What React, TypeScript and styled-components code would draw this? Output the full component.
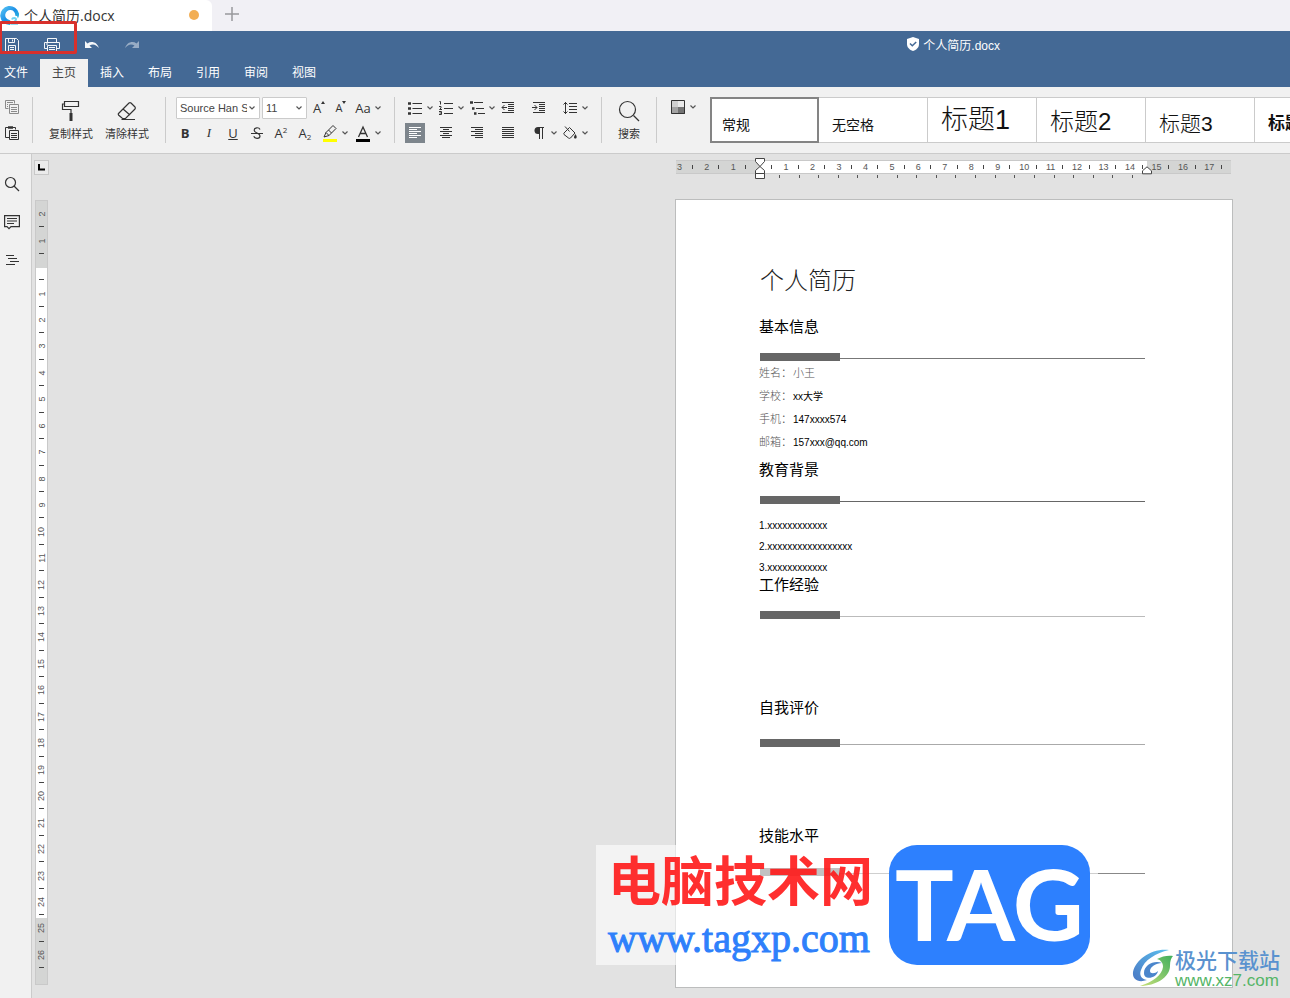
import React from 'react';
import styled, { createGlobalStyle } from 'styled-components';

const blue = '#446995';
const panel = '#f1f1f1';
const line = '#cbcbcb';
const ink = '#333';

const GlobalStyle = createGlobalStyle`
  * { box-sizing: border-box; }
  body {
    margin: 0;
    font-family: "Liberation Sans", "Noto Sans CJK SC", sans-serif;
    font-size: 12px;
    color: ${ink};
  }
  button, select { font: inherit; color: inherit; }
`;

const Shell = styled.div`
  position: relative;
  display: flex;
  flex-direction: column;
  min-height: 100vh;
  overflow: hidden;
  background: #e2e2e2;
`;

/* ---------- window tabs ---------- */

const TabStrip = styled.header`
  display: flex;
  align-items: stretch;
  height: 31px;
  background: #f1f0f5;
`;

const FileTab = styled.div`
  display: flex;
  align-items: center;
  width: 212px;
  padding: 0 13px 2px 0;
  gap: 4px;
  background: #fff;
  border-radius: 0 6px 0 0;
  font-family: "Open Sans", "Noto Sans CJK SC", sans-serif;
  font-size: 14px;
  color: #333;
`;

const UnsavedDot = styled.span`
  width: 10px;
  height: 10px;
  margin-left: auto;
  border-radius: 50%;
  background: #f2ae54;
`;

const PlainButton = styled.button`
  display: inline-flex;
  align-items: center;
  justify-content: center;
  padding: 0;
  border: 0;
  background: transparent;
`;

const NewTabButton = styled(PlainButton)`
  width: 40px;
  padding-bottom: 3px;
`;

/* ---------- title bar and menu ---------- */

const TitleBar = styled.div`
  display: flex;
  align-items: center;
  gap: 16px;
  height: 28px;
  padding-right: 290px;
  background: ${blue};
  color: #fff;
`;

const QuickButton = styled(PlainButton)<{ $dim?: boolean }>`
  width: 24px;
  height: 24px;
  opacity: ${(p) => (p.$dim ? 0.45 : 0.95)};
`;

const DocTitle = styled.h1`
  display: flex;
  align-items: center;
  gap: 4px;
  margin: 0 0 0 auto;
  padding-bottom: 2px;
  font-size: 12px;
  font-weight: 400;
`;

const MenuBar = styled.nav`
  display: flex;
  height: 28px;
  background: ${blue};
`;

const MenuTab = styled(PlainButton)<{ $active?: boolean; $first?: boolean }>`
  width: ${(p) => (p.$first ? 40 : 48)}px;
  padding: 0 ${(p) => (p.$first ? 8 : 0)}px 4px 0;
  font-family: "Noto Sans CJK SC", sans-serif;
  color: ${(p) => (p.$active ? '#444' : '#fff')};
  background: ${(p) => (p.$active ? panel : 'transparent')};
`;

/* ---------- toolbar ---------- */

const Toolbar = styled.div`
  display: flex;
  height: 67px;
  padding-top: 10px;
  background: ${panel};
  border-bottom: 1px solid ${line};
`;

const Separator = styled.div`
  flex: none;
  width: 1px;
  height: 46px;
  background: ${line};
`;

const ClipGroup = styled.div`
  display: flex;
  flex: none;
  flex-direction: column;
  gap: 6px;
  width: 32px;
`;

const BigGroup = styled.div<{ $pad: number }>`
  display: flex;
  flex: none;
  gap: 12px;
  padding: 0 ${(p) => p.$pad}px;
`;

const BigButton = styled(PlainButton)`
  flex-direction: column;
  gap: 4px;
  height: 46px;
  padding-top: 2px;
  font-size: 11px;
  line-height: 17px;
`;

const Rows = styled.div<{ $left: number; $right: number }>`
  display: flex;
  flex: none;
  flex-direction: column;
  gap: 4px;
  padding: 0 ${(p) => p.$right}px 0 ${(p) => p.$left}px;
`;

const Row = styled.div`
  display: flex;
  align-items: center;
  height: 22px;

  & + & { height: 20px; }
`;

const ParagraphGrid = styled.div`
  display: grid;
  flex: none;
  grid-template-columns: repeat(6, 31px);
  grid-template-rows: 22px 20px;
  row-gap: 4px;
  align-items: center;
  padding: 0 10px;
`;

const IconButton = styled(PlainButton)<{ $w?: number; $active?: boolean }>`
  width: ${(p) => p.$w ?? 20}px;
  height: 20px;
  color: ${(p) => (p.$active ? '#fff' : ink)};
  background: ${(p) => (p.$active ? '#7d858c' : 'transparent')};
`;

const SplitButton = styled(PlainButton)<{ $gap?: number }>`
  justify-content: flex-start;
  width: 30px;
  height: 20px;
  margin-left: ${(p) => p.$gap ?? 0}px;
`;

const IconSlot = styled.span`
  display: inline-flex;
  align-items: center;
  justify-content: center;
  width: 20px;
  height: 20px;
`;

const Letter = styled.span<{ $bold?: boolean; $italic?: boolean; $serif?: boolean; $deco?: string; $small?: boolean }>`
  font-family: ${(p) => (p.$serif ? '"Liberation Serif", serif' : '"Open Sans", sans-serif')};
  font-size: ${(p) => (p.$small ? 11 : 13)}px;
  line-height: 16px;
  font-weight: ${(p) => (p.$bold ? 700 : 400)};
  font-style: ${(p) => (p.$italic ? 'italic' : 'normal')};
  text-decoration: ${(p) => p.$deco ?? 'none'};

  sup, sub { font-size: 8px; line-height: 0; }
  sub { vertical-align: -2px; }
`;

const SelectBox = styled.label<{ $w: number; $gap: number }>`
  position: relative;
  width: ${(p) => p.$w}px;
  height: 22px;
  margin-left: ${(p) => p.$gap}px;

  svg { position: absolute; right: 3px; top: 7px; background: #fff; }

  select {
    appearance: none;
    width: 100%;
    height: 100%;
    padding: 0 8px 0 3px;
    border: 1px solid ${line};
    border-radius: 1px;
    background: #fff;
    font-size: 11px;
    color: #444;
  }
`;

const SchemeSlot = styled.div`
  flex: none;
  width: 53px;
  padding: 0 10px 0 11px;
`;

const Gallery = styled.div`
  display: flex;
  flex: 1;
  min-width: 0;
  height: 46px;
  overflow: hidden;
`;

const StyleCard = styled(PlainButton)<{ $size: number; $bold?: boolean; $active?: boolean }>`
  flex: none;
  align-items: flex-end;
  justify-content: flex-start;
  width: 109px;
  padding: 0 0 ${(p) => (p.$size > 20 ? 8 : 10)}px 13px;
  border: solid ${line};
  border-width: 1px 1px 1px 0;
  background: #fff;
  color: #111;
  font-size: ${(p) => p.$size}px;
  line-height: 1;
  font-weight: ${(p) => (p.$bold ? 700 : p.$size > 20 ? 300 : 400)};
  white-space: nowrap;
  ${(p) => p.$active && 'border: 2px solid #848484; padding: 0 0 9px 10px;'}
`;

/* ---------- workspace ---------- */

const Workspace = styled.div`
  display: flex;
  flex: 1;
`;

const SideBar = styled.aside`
  display: flex;
  flex: none;
  flex-direction: column;
  align-items: flex-start;
  gap: 14px;
  width: 32px;
  padding-top: 18px;
  background: ${panel};
  border-right: 1px solid ${line};
`;

const SideButton = styled(PlainButton)`
  width: 24px;
  height: 24px;
`;

const RulerColumn = styled.div`
  flex: none;
  width: 17px;
  padding: 6px 0 13px 2px;
`;

const TabStop = styled(PlainButton)`
  width: 15px;
  height: 15px;
  border: 1px solid #c8c8c8;
  background: #ebebeb;
`;

const VRuler = styled.div`
  display: flex;
  flex-direction: column;
  width: 13px;
  height: 785px;
  margin: 25px 0 0 1px;
  padding: 0 0 16px;
  border: 1px solid #c9c9c9;
  background: linear-gradient(#d4d5d4 67px, #fff 67px 717px, #d4d5d4 717px);
`;

const VCell = styled.div`
  position: relative;
  display: flex;
  flex: 1;
  align-items: center;
  justify-content: center;
  font-size: 9px;
  color: #555;

  span { transform: rotate(-90deg); }

  &::after {
    content: "";
    position: absolute;
    bottom: 0;
    left: 3px;
    width: 5px;
    height: 1px;
    background: #444;
  }
`;

const DocColumn = styled.main`
  width: 558px;
  margin: 6px 57px 11px auto;
`;

const HRuler = styled.div`
  position: relative;
  display: flex;
  height: 14px;
  margin: 0 2px 0 1px;
  padding-right: 9px;
  border: solid #c9c9c9;
  border-width: 1px 0;
  background: linear-gradient(90deg, #d4d5d4 84px, #fff 84px 471px, #d4d5d4 471px);
`;

const HCell = styled.div<{ $lead?: boolean }>`
  position: relative;
  display: flex;
  flex: ${(p) => (p.$lead ? 'none' : '1')};
  width: ${(p) => (p.$lead ? '17px' : 'auto')};
  align-items: center;
  justify-content: ${(p) => (p.$lead ? 'flex-start' : 'center')};
  padding-left: 1px;
  font-size: 9px;
  color: #555;

  &::after {
    content: "";
    position: absolute;
    right: 0;
    top: 4px;
    width: 1px;
    height: 4px;
    background: #444;
  }
`;

const Marker = styled.svg<{ $x: number; $y: number }>`
  position: absolute;
  left: ${(p) => p.$x}px;
  top: ${(p) => p.$y}px;
`;

const TabTicks = styled.div`
  display: flex;
  justify-content: space-between;
  height: 4px;
  margin: 1px 100px 0 104px;

  i { width: 1px; height: 3px; background: #555; }
`;

const Page = styled.article`
  margin-top: 20px;
  padding: 64px 87px 111px 84px;
  border: 1px solid #bcbdbd;
  background: #fff;
  color: #000;
`;

const PageTitle = styled.h2`
  margin: 0 0 22px;
  font-size: 24px;
  line-height: 34px;
  font-weight: 300;
  color: #222;
`;

const SectionTitle = styled.h3<{ $before: number; $after: number }>`
  margin: ${(p) => p.$before}px 0 ${(p) => p.$after}px -1px;
  font-size: 15px;
  line-height: 14px;
  font-weight: 400;
`;

const SectionRule = styled.div<{ $tone: string }>`
  width: 100%;
  height: 8px;
  background:
    linear-gradient(#666, #666) 0 0 / 80px 8px no-repeat,
    linear-gradient(${(p) => p.$tone}, ${(p) => p.$tone}) 0 5px / 100% 1px no-repeat;
`;

const Fields = styled.dl`
  margin: 0 0 0 -1px;
  padding-top: 1px;

  div { display: flex; height: 23px; line-height: 23px; }
  dt { width: 34px; font-size: 11px; font-weight: 300; color: #555; }
`;

const FieldValue = styled.dd<{ $soft?: boolean }>`
  margin: 0;
  font-size: ${(p) => (p.$soft ? 11 : 10)}px;
  font-weight: ${(p) => (p.$soft ? 300 : 400)};
  color: ${(p) => (p.$soft ? '#555' : '#000')};
`;

const Items = styled.ol`
  margin: 11px 0 0 -1px;
  padding: 0;
  list-style: none;
  font-size: 10px;
  line-height: 21px;
`;

/* ---------- overlays ---------- */

const Highlight = styled.div`
  position: absolute;
  left: -1px;
  top: 21px;
  width: 78px;
  height: 33px;
  border: 3px solid #d8302c;
  border-radius: 2px;
`;

const SiteBadge = styled.div`
  position: absolute;
  top: 845px;
  right: 192px;
  display: flex;
  justify-content: space-between;
  width: 502px;
  height: 120px;
  padding: 0 8px 0 12px;
  background: rgba(255, 255, 255, 0.6);
`;

const SiteName = styled.div`
  padding-bottom: 6px;
  font-family: "Noto Sans CJK SC", sans-serif;
  font-size: 53px;
  font-weight: 700;
  line-height: 66px;
  color: rgba(255, 24, 24, 0.9);
  white-space: nowrap;
`;

const SiteUrl = styled.div`
  font-family: "Liberation Serif", serif;
  font-size: 40px;
  line-height: 44px;
  color: #2e80fb;
  -webkit-text-stroke: 1px #2e80fb;
`;

const SiteLogo = styled.div`
  display: flex;
  align-items: center;
  justify-content: center;
  width: 201px;
  height: 120px;
  padding-bottom: 4px;
  border-radius: 28px;
  background: #2d80fe;
  color: #fff;
  font-family: Lato, sans-serif;
  font-size: 98px;
  font-weight: 700;
  line-height: 1;
`;

const CornerBadge = styled.div`
  position: absolute;
  right: 10px;
  top: 944px;
  display: flex;
  align-items: center;
  gap: 1px;
`;

const CornerName = styled.div`
  font-family: "Noto Sans CJK SC", sans-serif;
  font-size: 21px;
  font-weight: 500;
  line-height: 30px;
  color: #5a92cf;
`;

const CornerUrl = styled.div`
  padding-bottom: 3px;
  font-size: 17px;
  line-height: 14px;
  color: #55b567;
`;

/* ---------- icons ---------- */

type IconProps = { w?: number; h?: number; sw?: number; children: React.ReactNode };

const Icon = ({ w = 16, h = 16, sw = 1, children }: IconProps) => (
  <svg width={w} height={h} viewBox={`0 0 ${w} ${h}`} fill="none" stroke="currentColor" strokeWidth={sw} aria-hidden="true">
    {children}
  </svg>
);

const Chevron = () => (
  <svg width="10" height="8" viewBox="0 0 10 8" fill="none" stroke="#555" strokeWidth="1.2" aria-hidden="true">
    <path d="M2.5 2.5 5 5l2.5-2.5" />
  </svg>
);

const AlignIcon = ({ rows }: { rows: [number, number][] }) => (
  <Icon w={14} h={14} sw={1}>
    {rows.map(([a, b], i) => (
      <path key={i} d={`M${a} ${1.5 + i * 2}H${b}`} />
    ))}
  </Icon>
);

const Split = ({ label, gap, children }: { label: string; gap?: number; children: React.ReactNode }) => (
  <SplitButton aria-label={label} $gap={gap}>
    <IconSlot>{children}</IconSlot>
    <Chevron />
  </SplitButton>
);

const verticalLabels = ['2', '1', '', ...Array.from({ length: 26 }, (_, i) => String(i + 1))];
const horizontalLabels = ['2', '1', '', ...Array.from({ length: 17 }, (_, i) => String(i + 1))];

const menu = ['文件', '主页', '插入', '布局', '引用', '审阅', '视图'];

const styleCards = [
  { name: '常规', size: 14 },
  { name: '无空格', size: 14 },
  { name: '标题1', size: 27 },
  { name: '标题2', size: 24 },
  { name: '标题3', size: 21 },
  { name: '标题4', size: 17, bold: true },
];

const fields = [
  { name: '姓名：', value: '小王', soft: true },
  { name: '学校：', value: 'xx大学' },
  { name: '手机：', value: '147xxxx574' },
  { name: '邮箱：', value: '157xxx@qq.com' },
];

export default function App() {
  return (
    <Shell>
      <GlobalStyle />

      <TabStrip>
        <FileTab>
          <svg width="20" height="22" viewBox="0 0 20 22" aria-hidden="true">
            <defs>
              <linearGradient id="ring" x1="0" y1="0" x2="1" y2="1">
                <stop offset="0" stopColor="#62ccf6" />
                <stop offset="0.5" stopColor="#1b8fe6" />
                <stop offset="1" stopColor="#38cfd8" />
              </linearGradient>
            </defs>
            <path d="M10 21A9.500 9.500 0 1 1 19 9.500c.2 2-.3 3.600-1.200 5-.2-2.600-1.200-3-2.600-2.800a5 5 0 1 0-5.800 4.300c1.400.3 2 3 .6 5Z" fill="url(#ring)" />
            <path d="M12 15.500c.5-2 4-2 4 0 0 1.500-2 2-3.500 4.200H18" fill="none" stroke="#6fd3f2" strokeWidth="2" />
          </svg>
          个人简历.docx
          <UnsavedDot />
        </FileTab>
        <NewTabButton aria-label="新建标签">
          <svg width="14" height="14" viewBox="0 0 14 14" stroke="#98989c" strokeWidth="1.500" aria-hidden="true">
            <path d="M7 0v14M0 7h14" />
          </svg>
        </NewTabButton>
      </TabStrip>

      <TitleBar>
        <QuickButton aria-label="保存">
          <Icon w={14} h={14}>
            <path d="M.5.5h11l2 2v11H.5zM3.500.5v4h6v-4M7.500 1.500v2M3.500 13.500v-6h7v6M5 9.500h4M5 11.500h4" />
          </Icon>
        </QuickButton>
        <QuickButton aria-label="打印">
          <Icon w={16} h={14}>
            <path d="M3.500 4V.5h9V4M3.500 10.500h-3v-6h15v6h-3M3.500 7.500h9v6h-9zM5 9.500h6M5 11.500h6M2 6h2" />
          </Icon>
        </QuickButton>
        <QuickButton aria-label="撤销">
          <svg width="14" height="10" viewBox="0 0 14 10" fill="#fff" aria-hidden="true">
            <path d="M0 1v7h7L4.500 5.600C8 3.500 11 4.500 13.800 8 12.500 2.500 6.500.5 2.500 3.400Z" />
          </svg>
        </QuickButton>
        <QuickButton aria-label="重做" $dim>
          <svg width="14" height="10" viewBox="0 0 14 10" fill="#fff" aria-hidden="true">
            <path d="M14 1v7H7l2.500-2.400C6 3.500 3 4.500.2 8 1.500 2.500 7.500.5 11.500 3.400Z" />
          </svg>
        </QuickButton>
        <DocTitle>
          <svg width="12" height="14" viewBox="0 0 12 14" aria-hidden="true">
            <path d="M6 0l6 2v5c0 3.500-2.500 5.800-6 7-3.500-1.200-6-3.500-6-7V2z" fill="#fff" />
            <path d="M3 6.500l2.300 2.300L9.200 5" fill="none" stroke={blue} strokeWidth="1.500" />
          </svg>
          个人简历.docx
        </DocTitle>
      </TitleBar>

      <MenuBar>
        {menu.map((m, i) => (
          <MenuTab key={m} $first={i === 0} $active={i === 1}>{m}</MenuTab>
        ))}
      </MenuBar>

      <Toolbar>
        <ClipGroup>
          <IconButton $w={24} aria-label="复制">
            <svg width="14" height="14" viewBox="0 0 14 14" fill="none" stroke="#8a8a8a" aria-hidden="true">
              <path d="M3.500 8.500h-3v-8h9v3M2 2.500h6M2 4.500h1M2 6.500h1M4.500 4.500h9v9h-9zM6 7.500h6M6 9.500h6M6 11.500h6" />
            </svg>
          </IconButton>
          <IconButton $w={24} aria-label="粘贴">
            <Icon w={14} h={14}>
              <path d="M4.500 11.500h-4v-10h10v2M4.500 4.500h9v9h-9zM6 7.500h6M6 9.500h6M6 11.500h6" />
              <path d="M3 1.500h5" strokeWidth="2.500" />
            </Icon>
          </IconButton>
        </ClipGroup>
        <Separator />
        <BigGroup $pad={16}>
          <BigButton>
            <Icon w={20} h={22} sw={1.2}>
              <path d="M3.500 1.500h14v5h-14zM3.500 4H1.500v5.500H10V14" />
              <path d="M10 13v8" strokeWidth="3" />
            </Icon>
            复制样式
          </BigButton>
          <BigButton>
            <Icon w={20} h={22} sw={1.2}>
              <path d="M1.500 13.500 12 3q1-.8 2 0l4 4q.8 1 0 2L8.500 18.500h-3L1.500 15q-.6-.8 0-1.500ZM6 9l7 6M4.500 19.500H18" />
            </Icon>
            清除样式
          </BigButton>
        </BigGroup>
        <Separator />
        <Rows $left={7} $right={11}>
          <Row>
            <SelectBox $w={84} $gap={3}>
              <select aria-label="字体" defaultValue="Source Han Sans">
                <option>Source Han Sans</option>
              </select>
              <Chevron />
            </SelectBox>
            <SelectBox $w={45} $gap={2}>
              <select aria-label="字号" defaultValue="11">
                <option>11</option>
              </select>
              <Chevron />
            </SelectBox>
            <IconButton $w={24} aria-label="增大字号">
              <Letter>A</Letter>
              <svg width="4" height="14" viewBox="0 0 4 14" fill={ink} aria-hidden="true"><path d="M2 0l2 3H0z" /></svg>
            </IconButton>
            <IconButton aria-label="减小字号">
              <Letter $small>A</Letter>
              <svg width="4" height="14" viewBox="0 0 4 14" fill={ink} aria-hidden="true"><path d="M2 3l2-3H0z" /></svg>
            </IconButton>
            <Split label="更改大小写" gap={2}><Letter>Aa</Letter></Split>
          </Row>
          <Row>
            <IconButton $w={24} aria-label="粗体"><Letter $bold>B</Letter></IconButton>
            <IconButton $w={24} aria-label="斜体"><Letter $italic $serif>I</Letter></IconButton>
            <IconButton $w={24} aria-label="下划线"><Letter $deco="underline">U</Letter></IconButton>
            <IconButton $w={24} aria-label="删除线">
              <Icon w={12} h={14} sw={1.2}>
                <path d="M9 3.500C8 1 3.200 1.200 3.200 4.200 3.200 7.500 9 6.500 9 10c0 3-5.200 3.200-6.200.3M0 7.500h12" />
              </Icon>
            </IconButton>
            <IconButton $w={24} aria-label="上标"><Letter>A<sup>2</sup></Letter></IconButton>
            <IconButton $w={24} aria-label="下标"><Letter>A<sub>2</sub></Letter></IconButton>
            <Split label="突出显示颜色" gap={3}>
              <Icon w={16} h={18}>
                <path d="M4 8.500 11 1.500l3 3-7 7zM4 8.500l-2 4.500 5-1.500M6.500 6l3 3" />
                <path d="M1 16.500h14" stroke="#ff0" strokeWidth="3" />
              </Icon>
            </Split>
            <Split label="字体颜色" gap={3}>
              <Icon w={14} h={18}>
                <path d="M2.500 13 7 3l4.500 10M4 9.500h6" strokeWidth="1.300" />
                <path d="M0 16.500h14" stroke="#000" strokeWidth="3" />
              </Icon>
            </Split>
          </Row>
        </Rows>
        <Separator />
        <ParagraphGrid>
          <Split label="项目符号">
            <Icon w={14} h={14}>
              <path d="M4.500 2.500H14M4.500 7.500H14M4.500 12.500H14" />
              <path d="M0 2.500h3M0 7.500h3M0 12.500h3" strokeWidth="2.500" />
            </Icon>
          </Split>
          <Split label="编号">
            <Icon w={14} h={14}>
              <path d="M5 2.500h9M5 7.500h9M5 12.500h9M.5.5h1v3M0 5.500h2v1.500l-1.500 1.500H3M0 10.500h2.500v3H0M.5 12h2" />
            </Icon>
          </Split>
          <Split label="多级列表">
            <Icon w={16} h={14}>
              <path d="M5 1.500h9M7 7.500h8M9 12.500h7" />
              <path d="M1 1.500h3M3 7.500h2.500M5 12.500h2.500" strokeWidth="2.500" />
            </Icon>
          </Split>
          <IconButton aria-label="减少缩进">
            <Icon w={14} h={14}>
              <path d="M1 1.500h12M7 3.500h6M7 5.500h6M7 7.500h6M7 9.500h6M1 11.500h12M6 6.500H1M3.500 4 1 6.500 3.500 9" />
            </Icon>
          </IconButton>
          <IconButton aria-label="增加缩进">
            <Icon w={14} h={14}>
              <path d="M1 1.500h12M7 3.500h6M7 5.500h6M7 7.500h6M7 9.500h6M1 11.500h12M0 6.500h5M2.500 4 5 6.500 2.500 9" />
            </Icon>
          </IconButton>
          <Split label="行距">
            <Icon w={14} h={14}>
              <path d="M6 2.500h8M6 5.500h8M6 8.500h8M6 11.500h8M2.500 1v12M.5 3.500l2-2 2 2M.5 10.500l2 2 2-2" />
            </Icon>
          </Split>
          <IconButton aria-label="左对齐" $active>
            <AlignIcon rows={[[1, 13], [1, 9], [1, 13], [1, 9], [1, 13], [1, 9]]} />
          </IconButton>
          <IconButton aria-label="居中">
            <AlignIcon rows={[[1, 13], [4, 10], [1, 13], [4, 10], [1, 13], [3, 11]]} />
          </IconButton>
          <IconButton aria-label="右对齐">
            <AlignIcon rows={[[1, 13], [5, 13], [1, 13], [5, 13], [1, 13], [5, 13]]} />
          </IconButton>
          <IconButton aria-label="两端对齐">
            <AlignIcon rows={[[1, 13], [1, 13], [1, 13], [1, 13], [1, 13], [1, 13]]} />
          </IconButton>
          <Split label="段落标记">
            <Icon w={12} h={14}>
              <path d="M7 1.500h4M6.500 1v12M9.500 1v12" />
              <path d="M6.500 1v7H5a3.500 3.500 0 0 1 0-7z" fill={ink} stroke="none" />
            </Icon>
          </Split>
          <Split label="底纹">
            <Icon w={16} h={16}>
              <path d="M2 8l5.500-5.500 5.500 5.500-4.500 5q-1 .8-2 0L2 9.500q-.5-.8 0-1.500ZM3 1.500l4.500 5" />
              <path d="M13.500 9c1 2 1.800 3 .8 4.200-1 .8-2.300.2-2.300-1 0-.8.800-1.700 1.500-3.200Z" fill={ink} stroke="none" />
            </Icon>
          </Split>
        </ParagraphGrid>
        <Separator />
        <BigGroup $pad={16}>
          <BigButton>
            <Icon w={22} h={22} sw={1.2}>
              <circle cx="9.500" cy="9.500" r="8" />
              <path d="M15.500 15.500l5.500 5.500" />
            </Icon>
            搜索
          </BigButton>
        </BigGroup>
        <Separator />
        <SchemeSlot>
          <Split label="配色方案">
            <svg width="16" height="16" viewBox="0 0 16 16" aria-hidden="true">
              <path d="M1 1h7v7H1z" fill="#d0d0d0" />
              <path d="M8 1h7v7H8z" fill="#e9e9e9" />
              <path d="M1 8h7v7H1z" fill="#a3a3a3" />
              <path d="M8 8h7v7H8z" fill="#747474" />
              <path d="M1.500 1.500h13v13h-13z" fill="none" stroke="#333" />
            </svg>
          </Split>
        </SchemeSlot>
        <Gallery>
          {styleCards.map((c, i) => (
            <StyleCard key={c.name} $size={c.size} $bold={c.bold} $active={i === 0}>{c.name}</StyleCard>
          ))}
        </Gallery>
      </Toolbar>

      <Workspace>
        <SideBar>
          <SideButton aria-label="查找">
            <Icon w={16} h={16} sw={1.2}>
              <circle cx="6.500" cy="6.500" r="5" />
              <path d="M10 10l5 5" />
            </Icon>
          </SideButton>
          <SideButton aria-label="批注">
            <Icon w={16} h={16} sw={1.2}>
              <path d="M.6 1.600h14.800v11H7l-2 2-2-2H.6zM3 4.500h10M3 7h10M3 9.500h7" />
            </Icon>
          </SideButton>
          <SideButton aria-label="导航">
            <Icon w={14} h={12}>
              <path d="M1 1.500h8M3 4.500h9M5 7.500h9M1 10.500h9" strokeWidth="1.200" />
            </Icon>
          </SideButton>
        </SideBar>

        <RulerColumn>
          <TabStop aria-label="制表符">
            <svg width="7" height="7" viewBox="0 0 7 7" aria-hidden="true"><path d="M1 0v5.500h6" fill="none" stroke="#000" strokeWidth="2" /></svg>
          </TabStop>
          <VRuler>
            {verticalLabels.map((n, i) => (
              <VCell key={i}><span>{n}</span></VCell>
            ))}
          </VRuler>
        </RulerColumn>

        <DocColumn>
          <HRuler>
            <HCell $lead>3</HCell>
            {horizontalLabels.map((n, i) => (
              <HCell key={i}>{n}</HCell>
            ))}
            <Marker $x={79} $y={-4} width="11" height="24" viewBox="0 0 11 24" fill="#fff" stroke="#444">
              <path d="M.5 1.500h9v3L5 9.500.5 4.500zM5 9.500l4.500 4v3h-9v-3zM.5 16.500h9v5h-9z" />
            </Marker>
            <Marker $x={466} $y={5} width="11" height="9" viewBox="0 0 11 9" fill="#fff" stroke="#444">
              <path d="M5 .8l4.500 4v3h-9v-3z" />
            </Marker>
          </HRuler>
          <TabTicks>
            {Array.from({ length: 19 }, (_, i) => <i key={i} />)}
          </TabTicks>

          <Page>
            <PageTitle>个人简历</PageTitle>

            <SectionTitle $before={0} $after={19}>基本信息</SectionTitle>
            <SectionRule $tone="#777" />
            <Fields>
              {fields.map((f) => (
                <div key={f.name}>
                  <dt>{f.name}</dt>
                  <FieldValue $soft={f.soft}>{f.value}</FieldValue>
                </div>
              ))}
            </Fields>

            <SectionTitle $before={9} $after={19}>教育背景</SectionTitle>
            <SectionRule $tone="#666" />
            <Items>
              <li>1.xxxxxxxxxxxx</li>
              <li>2.xxxxxxxxxxxxxxxxx</li>
              <li>3.xxxxxxxxxxxx</li>
            </Items>

            <SectionTitle $before={0} $after={19}>工作经验</SectionTitle>
            <SectionRule $tone="#bbb" />

            <SectionTitle $before={82} $after={24}>自我评价</SectionTitle>
            <SectionRule $tone="#aaa" />

            <SectionTitle $before={82} $after={25}>技能水平</SectionTitle>
            <SectionRule $tone="#888" />
          </Page>
        </DocColumn>
      </Workspace>

      <Highlight />

      <SiteBadge>
        <div>
          <SiteName>电脑技术网</SiteName>
          <SiteUrl>www.tagxp.com</SiteUrl>
        </div>
        <SiteLogo>TAG</SiteLogo>
      </SiteBadge>

      <CornerBadge>
        <svg width="42" height="42" viewBox="0 0 42 42" aria-hidden="true">
          <defs>
            <linearGradient id="swirlBlue" x1="1" y1="0" x2="0" y2="1">
              <stop offset="0" stopColor="#5cc0ee" />
              <stop offset="1" stopColor="#4a78c4" />
            </linearGradient>
            <linearGradient id="swirlGreen" x1="1" y1="0" x2="0" y2="1">
              <stop offset="0" stopColor="#3fae5c" />
              <stop offset="1" stopColor="#c8e07a" />
            </linearGradient>
          </defs>
          <path d="M37 3C20 1 4 12 1 25c-1 8 6 11 14 8-6-1-8-5-6-10C12 13 24 6 37 3Z" fill="url(#swirlBlue)" />
          <path d="M12 26c0-8 10-13 18-10-6 0-12 4-12 8 0 3 5 3 8 0-1 7-14 10-14 2Z" fill="#4b86cc" />
          <path d="M25 12c5-3 12-4 16-3-2 2-3 5-3 10 0 11-14 20-30 20 13-4 22-11 23-19 0-4-2-7-6-8Z" fill="url(#swirlGreen)" />
        </svg>
        <div>
          <CornerName>极光下载站</CornerName>
          <CornerUrl>www.xz7.com</CornerUrl>
        </div>
      </CornerBadge>
    </Shell>
  );
}
